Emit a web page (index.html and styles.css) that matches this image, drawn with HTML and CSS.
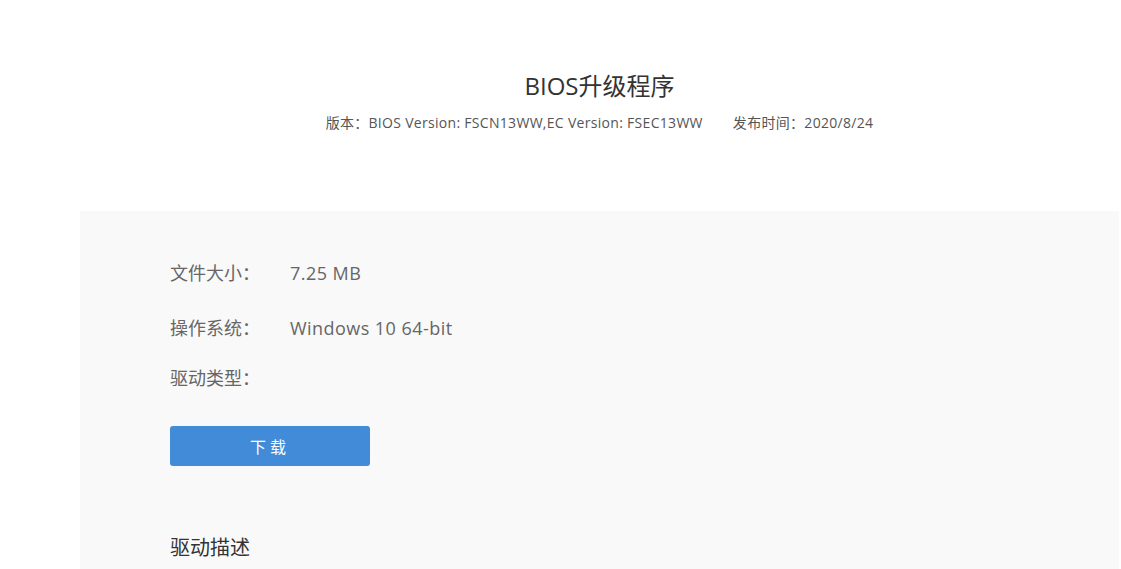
FILE: index.html
```html
<!DOCTYPE html>
<html lang="zh-CN">
<head>
<meta charset="utf-8">
<title>BIOS升级程序</title>
<link rel="stylesheet" href="styles.css">
</head>
<body>
<div class="page">
  <header class="head">
    <h1 class="title">BIOS升级程序</h1>
    <div class="meta">
      <span>版本：BIOS Version: FSCN13WW,EC Version: FSEC13WW</span>
      <span>发布时间：2020/8/24</span>
    </div>
  </header>
  <section class="panel">
    <div class="row row-1"><span class="label">文件大小：</span><span class="value">7.25 MB</span></div>
    <div class="row row-2"><span class="label">操作系统：</span><span class="value">Windows 10 64-bit</span></div>
    <div class="row row-3"><span class="label">驱动类型：</span><span class="value"></span></div>
    <button class="btn">下 载</button>
    <h2 class="desc">驱动描述</h2>
  </section>
</div>
</body>
</html>
```
FILE: styles.css
```css
html, body {
  margin: 0;
  padding: 0;
  background: #fff;
}
body {
  font-family: "Open Sans", "Noto Sans CJK SC", sans-serif;
  overflow: hidden;
}
.page {
  width: 1039px;
  margin-left: 80px;
}
.head {
  padding-top: 70px;
  text-align: center;
}
.title {
  margin: 0;
  font-size: 24px;
  line-height: 32px;
  font-weight: 400;
  color: #333;
}
.meta {
  margin-top: 11px;
  font-size: 14px;
  line-height: 20px;
  color: #555;
  letter-spacing: 0.3px;
  display: flex;
  justify-content: center;
  gap: 30px;
}
.panel {
  margin-top: 78px;
  background: #f9f9f9;
  padding: 50px 90px 40px;
  min-height: 400px;
}
.row {
  display: flex;
  font-size: 18px;
  line-height: 24px;
  color: #666;
}
.row-1 { margin-bottom: 31px; }
.row-2 { margin-bottom: 26px; }
.label {
  width: 120px;
}
.value {
  letter-spacing: 0.45px;
}
.btn {
  display: block;
  margin-top: 36px;
  width: 200px;
  height: 40px;
  border: 0;
  border-radius: 3px;
  background: #418bd9;
  color: #fff;
  font-family: inherit;
  font-size: 16px;
  padding: 0 4px 0 0;
  cursor: pointer;
}
.desc {
  margin: 68px 0 0;
  font-size: 20px;
  line-height: 28px;
  font-weight: 400;
  color: #333;
}
```
